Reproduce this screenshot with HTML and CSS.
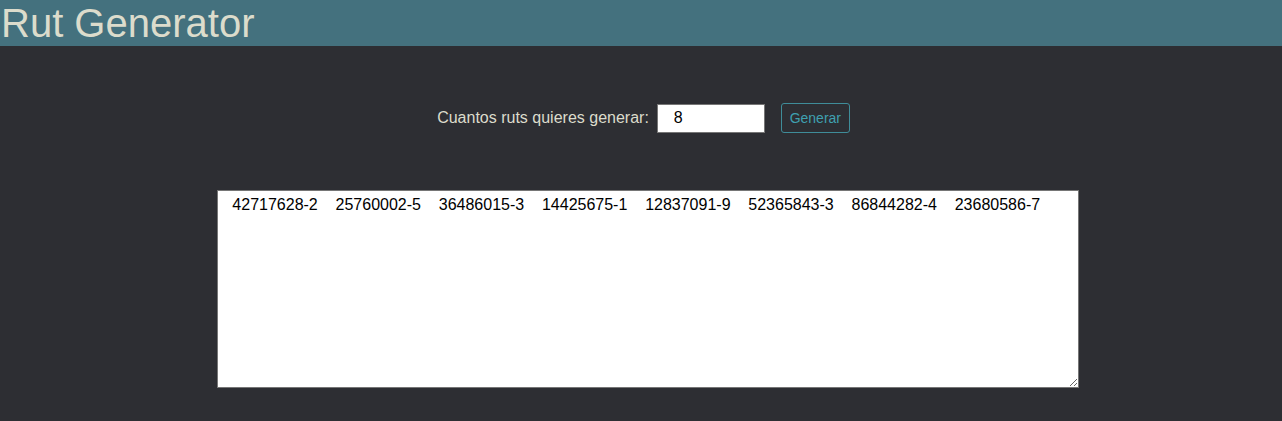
FILE: index.html
```html
<!DOCTYPE html>
<html lang="es">
<head>
<meta charset="utf-8">
<title>Rut Generator</title>
<link rel="stylesheet" href="styles.css">
</head>
<body>
<header class="topbar">
  <h1 class="title">Rut Generator</h1>
</header>
<main class="content">
  <form class="controls">
    <label class="label" for="count">Cuantos ruts quieres generar:</label>
    <input class="count" id="count" type="text" value="8">
    <button class="btn" type="button">Generar</button>
  </form>
  <div class="output-row">
    <textarea class="output">   42717628-2    25760002-5    36486015-3    14425675-1    12837091-9    52365843-3    86844282-4    23680586-7</textarea>
  </div>
</main>
</body>
</html>
```
FILE: styles.css
```css
html, body {
  margin: 0;
  padding: 0;
  background: #2d2e33;
  height: 100%;
}
body {
  font-family: "Liberation Sans", Arial, sans-serif;
  color: #dcdccc;
}
.topbar {
  background: #44717e;
  height: 46px;
}
.title {
  margin: 0;
  padding-left: 1px;
  font-size: 40px;
  font-weight: normal;
  line-height: 47px;
  color: #dcdccc;
}
.content {
  display: flex;
  flex-direction: column;
}
.controls {
  display: flex;
  align-items: center;
  justify-content: center;
  margin: 57px 0 0;
  padding-left: 5px;
  height: 30px;
}
.label {
  font-size: 16px;
  margin-right: 8px;
}
.count {
  box-sizing: border-box;
  width: 108px;
  height: 29px;
  border: 1px solid #767676;
  padding: 0 0 0 16px;
  font-family: "Liberation Sans", Arial, sans-serif;
  font-size: 16px;
  color: #000;
  background: #fff;
  margin: 0 16px 0 0;
  outline: none;
}
.btn {
  box-sizing: border-box;
  height: 30px;
  width: 69px;
  padding: 0;
  border: 1px solid #3f8c99;
  border-radius: 3px;
  background: transparent;
  color: #3fa0b0;
  font-family: "Liberation Sans", Arial, sans-serif;
  font-size: 14px;
}
.output-row {
  display: flex;
  justify-content: center;
  padding-left: 14px;
  margin-top: 57px;
}
.output {
  box-sizing: border-box;
  width: 862px;
  height: 198px;
  margin: 0;
  padding: 5px 2px 3px 1px;
  border: 1px solid #767676;
  background: #fff;
  color: #000;
  font-family: "Liberation Sans", Arial, sans-serif;
  font-size: 16px;
  line-height: normal;
}
```
